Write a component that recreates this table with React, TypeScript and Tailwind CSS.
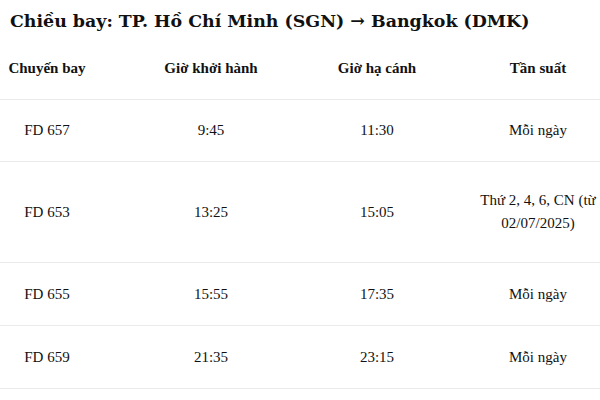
const rows = [
  { flight: "FD 657", dep: "9:45", arr: "11:30", freq: "Mỗi ngày", h: "h-[62px]" },
  { flight: "FD 653", dep: "13:25", arr: "15:05", freq: "Thứ 2, 4, 6, CN (từ 02/07/2025)", h: "h-[101px]" },
  { flight: "FD 655", dep: "15:55", arr: "17:35", freq: "Mỗi ngày", h: "h-[63px]" },
  { flight: "FD 659", dep: "21:35", arr: "23:15", freq: "Mỗi ngày", h: "h-[63px]" },
];

const cols = "grid grid-cols-[94px_234px_98px_1fr] items-center border-b border-[#eaeaea] text-center";

export default function App() {
  return (
    <div className="h-[400px] w-[600px] overflow-hidden bg-white text-[#111]">
      <h1 className="h-[37px] pl-[10px] pt-[10px] font-['DejaVu_Serif',serif] text-[17.4px] font-bold leading-[22px]">
        Chiều bay: TP. Hồ Chí Minh (SGN) → Bangkok (DMK)
      </h1>
      <div className="font-['Liberation_Serif',serif] text-[15px] leading-[23px]">
        <div className={`${cols} h-[63px] font-bold`}>
          <div>Chuyến bay</div>
          <div>Giờ khởi hành</div>
          <div>Giờ hạ cánh</div>
          <div className="pl-[50px]">Tần suất</div>
        </div>
        {rows.map((r) => (
          <div key={r.flight} className={`${cols} ${r.h}`}>
            <div>{r.flight}</div>
            <div>{r.dep}</div>
            <div>{r.arr}</div>
            <div className="pl-[50px]">{r.freq}</div>
          </div>
        ))}
      </div>
    </div>
  );
}
